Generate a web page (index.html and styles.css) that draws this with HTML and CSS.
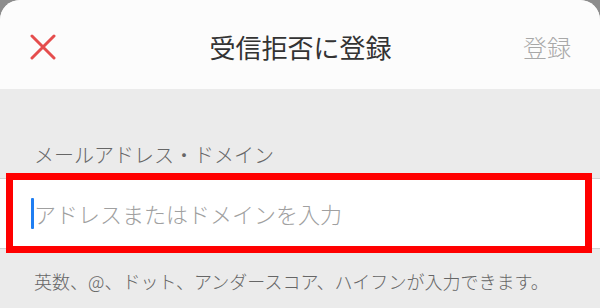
FILE: index.html
```html
<!DOCTYPE html>
<html lang="ja">
<head>
<meta charset="utf-8">
<link rel="stylesheet" href="styles.css">
</head>
<body>
<div class="sheet">
  <header class="bar">
    <div class="bar-left">
      <svg class="close" width="26" height="26" viewBox="0 0 26 26" aria-hidden="true">
        <path d="M2 2 L24 24 M24 2 L2 24" stroke="#e54d4d" stroke-width="3" stroke-linecap="round" fill="none"/>
      </svg>
    </div>
    <div class="bar-title">受信拒否に登録</div>
    <div class="bar-right">登録</div>
  </header>
  <main class="form">
    <div class="label">メールアドレス・ドメイン</div>
    <div class="field">
      <span class="caret"></span>
      <span class="placeholder">アドレスまたはドメインを入力</span>
      <div class="highlight"></div>
    </div>
    <div class="hint">英数、@、ドット、アンダースコア、ハイフンが入力できます。</div>
  </main>
</div>
</body>
</html>
```

FILE: styles.css
```css
html, body {
  margin: 0;
  padding: 0;
}
body {
  background: #8c8c8c;
  font-family: "Noto Sans CJK JP", "Noto Sans", sans-serif;
  width: 600px;
  height: 308px;
  overflow: hidden;
}
.sheet {
  background: #ebebeb;
  border-radius: 20px 20px 0 0;
  height: 308px;
  overflow: hidden;
}
.bar {
  height: 89px;
  box-sizing: border-box;
  padding: 4px 29px 0 30px;
  background: #fcfcfc;
  display: grid;
  grid-template-columns: 1fr auto 1fr;
  align-items: center;
}
.bar-left {
  display: flex;
  align-items: center;
}
.close {
  display: block;
}
.bar-title {
  font-size: 26px;
  color: #333333;
  line-height: 1;
}
.bar-right {
  justify-self: end;
  font-size: 24px;
  color: #a8a8a8;
  line-height: 1;
  font-weight: 300;
}
.form {
  padding-top: 52px;
}
.label {
  padding-left: 34px;
  font-size: 20px;
  line-height: 28px;
  color: #666666;
  font-weight: 300;
  margin-bottom: 9px;
}
.field {
  position: relative;
  background: #ffffff;
  border-top: 1px solid #d2d2d2;
  border-bottom: 1px solid #d2d2d2;
  height: 69px;
  box-sizing: content-box;
  display: flex;
  align-items: center;
  padding-left: 31px;
}
.caret {
  width: 3px;
  height: 31px;
  background: #1f7ef2;
  border-radius: 1px;
}
.placeholder {
  font-size: 22px;
  color: #a0a0a0;
  line-height: 1;
  font-weight: 300;
  margin-top: -2px;
}
.highlight {
  position: absolute;
  top: -6px;
  left: 6px;
  right: 8px;
  bottom: -5px;
  border: 7px solid #ff0000;
}
.hint {
  padding-left: 34px;
  margin-top: 19px;
  font-size: 18px;
  line-height: 26px;
  color: #666666;
  font-weight: 300;
}
```
